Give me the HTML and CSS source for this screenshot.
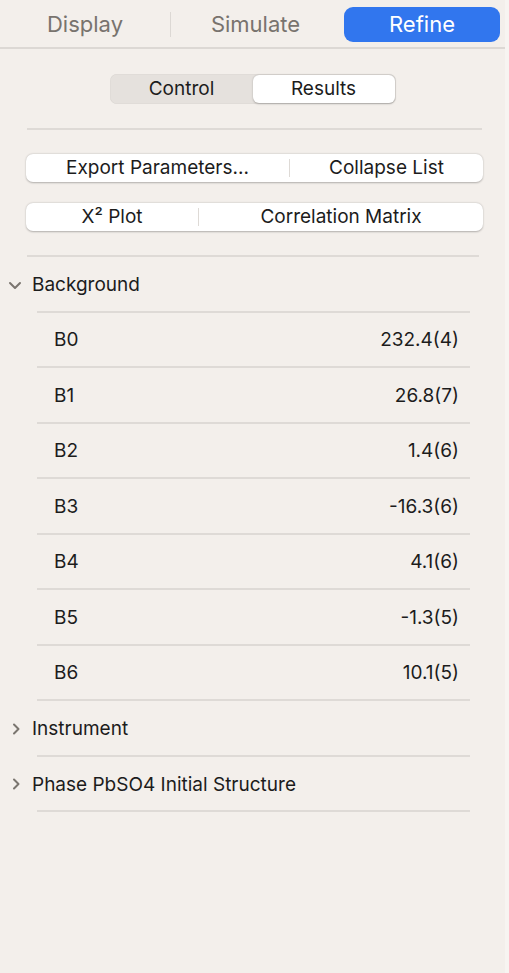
FILE: index.html
```html
<!DOCTYPE html>
<html>
<head>
<meta charset="utf-8">
<link rel="stylesheet" href="styles.css">
</head>
<body>
<div class="app">
  <div class="tabbar">
    <div class="tab tab-display">Display</div>
    <div class="tab-sep"></div>
    <div class="tab tab-sim">Simulate</div>
    <div class="tab tab-active">Refine</div>
  </div>

  <div class="seg-wrap">
    <div class="seg">
      <div class="seg-item">Control</div>
      <div class="seg-item seg-on">Results</div>
    </div>
  </div>

  <div class="rule rule-a"></div>

  <div class="btn-group bg-1">
    <div class="btn">Export Parameters...</div>
    <div class="btn-div"></div>
    <div class="btn">Collapse List</div>
  </div>
  <div class="btn-group bg-2">
    <div class="btn">X² Plot</div>
    <div class="btn-div"></div>
    <div class="btn">Correlation Matrix</div>
  </div>

  <div class="rule rule-b"></div>

  <div class="tree">
    <div class="group-head">
      <svg class="chev" width="14" height="10" viewBox="0 0 14 10"><path d="M2 3 L7 8 L12 3" fill="none" stroke="#7a756f" stroke-width="2" stroke-linecap="round" stroke-linejoin="round"/></svg>
      <span>Background</span>
    </div>
    <div class="row"><span>B0</span><span>232.4(4)</span></div>
    <div class="row"><span>B1</span><span>26.8(7)</span></div>
    <div class="row"><span>B2</span><span>1.4(6)</span></div>
    <div class="row"><span>B3</span><span>-16.3(6)</span></div>
    <div class="row"><span>B4</span><span>4.1(6)</span></div>
    <div class="row"><span>B5</span><span>-1.3(5)</span></div>
    <div class="row"><span>B6</span><span>10.1(5)</span></div>
    <div class="group-head">
      <svg class="chev chev-r" width="14" height="14" viewBox="0 0 14 14"><path d="M5 2.5 L9.5 7 L5 11.5" fill="none" stroke="#7a756f" stroke-width="2" stroke-linecap="round" stroke-linejoin="round"/></svg>
      <span>Instrument</span>
    </div>
    <div class="group-head">
      <svg class="chev chev-r" width="14" height="14" viewBox="0 0 14 14"><path d="M5 2.5 L9.5 7 L5 11.5" fill="none" stroke="#7a756f" stroke-width="2" stroke-linecap="round" stroke-linejoin="round"/></svg>
      <span>Phase PbSO4 Initial Structure</span>
    </div>
  </div>
</div>
</body>
</html>
```

FILE: styles.css
```css
html, body {
  margin: 0;
  padding: 0;
}
body {
  background: #f3efeb;
  font-family: Inter, "Noto Sans", "Liberation Sans", sans-serif;
  color: #1c1c1c;
  width: 509px;
  height: 973px;
  overflow: hidden;
}
.app {
  width: 505px;
  height: 973px;
  border-right: 4px solid #f7f4f1;
}
.tabbar {
  display: flex;
  align-items: center;
  height: 49px;
  box-sizing: border-box;
  padding-top: 1px;
  border-bottom: 2px solid #dcd8d4;
}
.tab {
  font-size: 22px;
  color: #78736e;
  text-align: center;
}
.tab-display {
  width: 170px;
}
.tab-sep {
  width: 1px;
  height: 25px;
  background: #dcd8d4;
}
.tab-sim {
  width: 169px;
}
.tab-active {
  margin-left: 4px;
  width: 156px;
  height: 35px;
  line-height: 35px;
  background: #3176ee;
  color: #ffffff;
  border-radius: 9px;
}
.seg-wrap {
  display: flex;
  justify-content: center;
  margin-top: 25px;
}
.seg {
  display: flex;
  width: 286px;
  height: 30px;
  background: #e5e1dd;
  border-radius: 7px;
  padding: 1px;
  box-sizing: border-box;
  box-shadow: inset 0 0 0 0.5px #dbd7d3;
}
.seg-item {
  flex: 1;
  text-align: center;
  font-size: 19px;
  line-height: 28px;
  color: #1c1c1c;
}
.seg-on {
  background: #ffffff;
  border-radius: 6px;
  box-shadow: 0 0.5px 2px rgba(0,0,0,0.25);
}
.rule {
  height: 2px;
  background: #dedad6;
}
.rule-a {
  margin: 24px 23px 0 27px;
}
.btn-group {
  display: grid;
  align-items: center;
  height: 28px;
  margin-left: 26px;
  width: 457px;
  background: #ffffff;
  border-radius: 7px;
  box-shadow: 0 0.5px 2px rgba(0,0,0,0.28);
  font-size: 19px;
}
.bg-1 {
  margin-top: 24px;
  grid-template-columns: 263px 1px 1fr;
}
.bg-2 {
  margin-top: 21px;
  grid-template-columns: 172px 1px 1fr;
}
.btn {
  text-align: center;
  line-height: 28px;
}
.btn-div {
  height: 18px;
  background: #dedad6;
}
.rule-b {
  margin: 24px 26px 0 27px;
}
.tree {
  display: flex;
  flex-direction: column;
}
.group-head {
  display: flex;
  align-items: center;
  height: 53.5px;
  box-sizing: border-box;
  padding-top: 2px;
  font-size: 19px;
  position: relative;
  border-bottom: 2px solid transparent;
}
.row {
  position: relative;
  display: flex;
  justify-content: space-between;
  align-items: center;
  height: 53.5px;
  box-sizing: content-box;
  border-bottom: 2px solid transparent;
  padding: 1px 46px 0 54px;
  font-size: 19px;
}
.row {
  height: 52.5px;
}
.group-head {
  height: 55.5px;
}
.group-head::after,
.row::after {
  content: "";
  position: absolute;
  left: 37px;
  width: 433px;
  bottom: -2px;
  height: 2px;
  background: #dedad6;
}
.chev {
  margin-left: 8px;
  margin-right: 10px;
}
.chev-r {
  margin-left: 9px;
  margin-right: 9px;
}
```
